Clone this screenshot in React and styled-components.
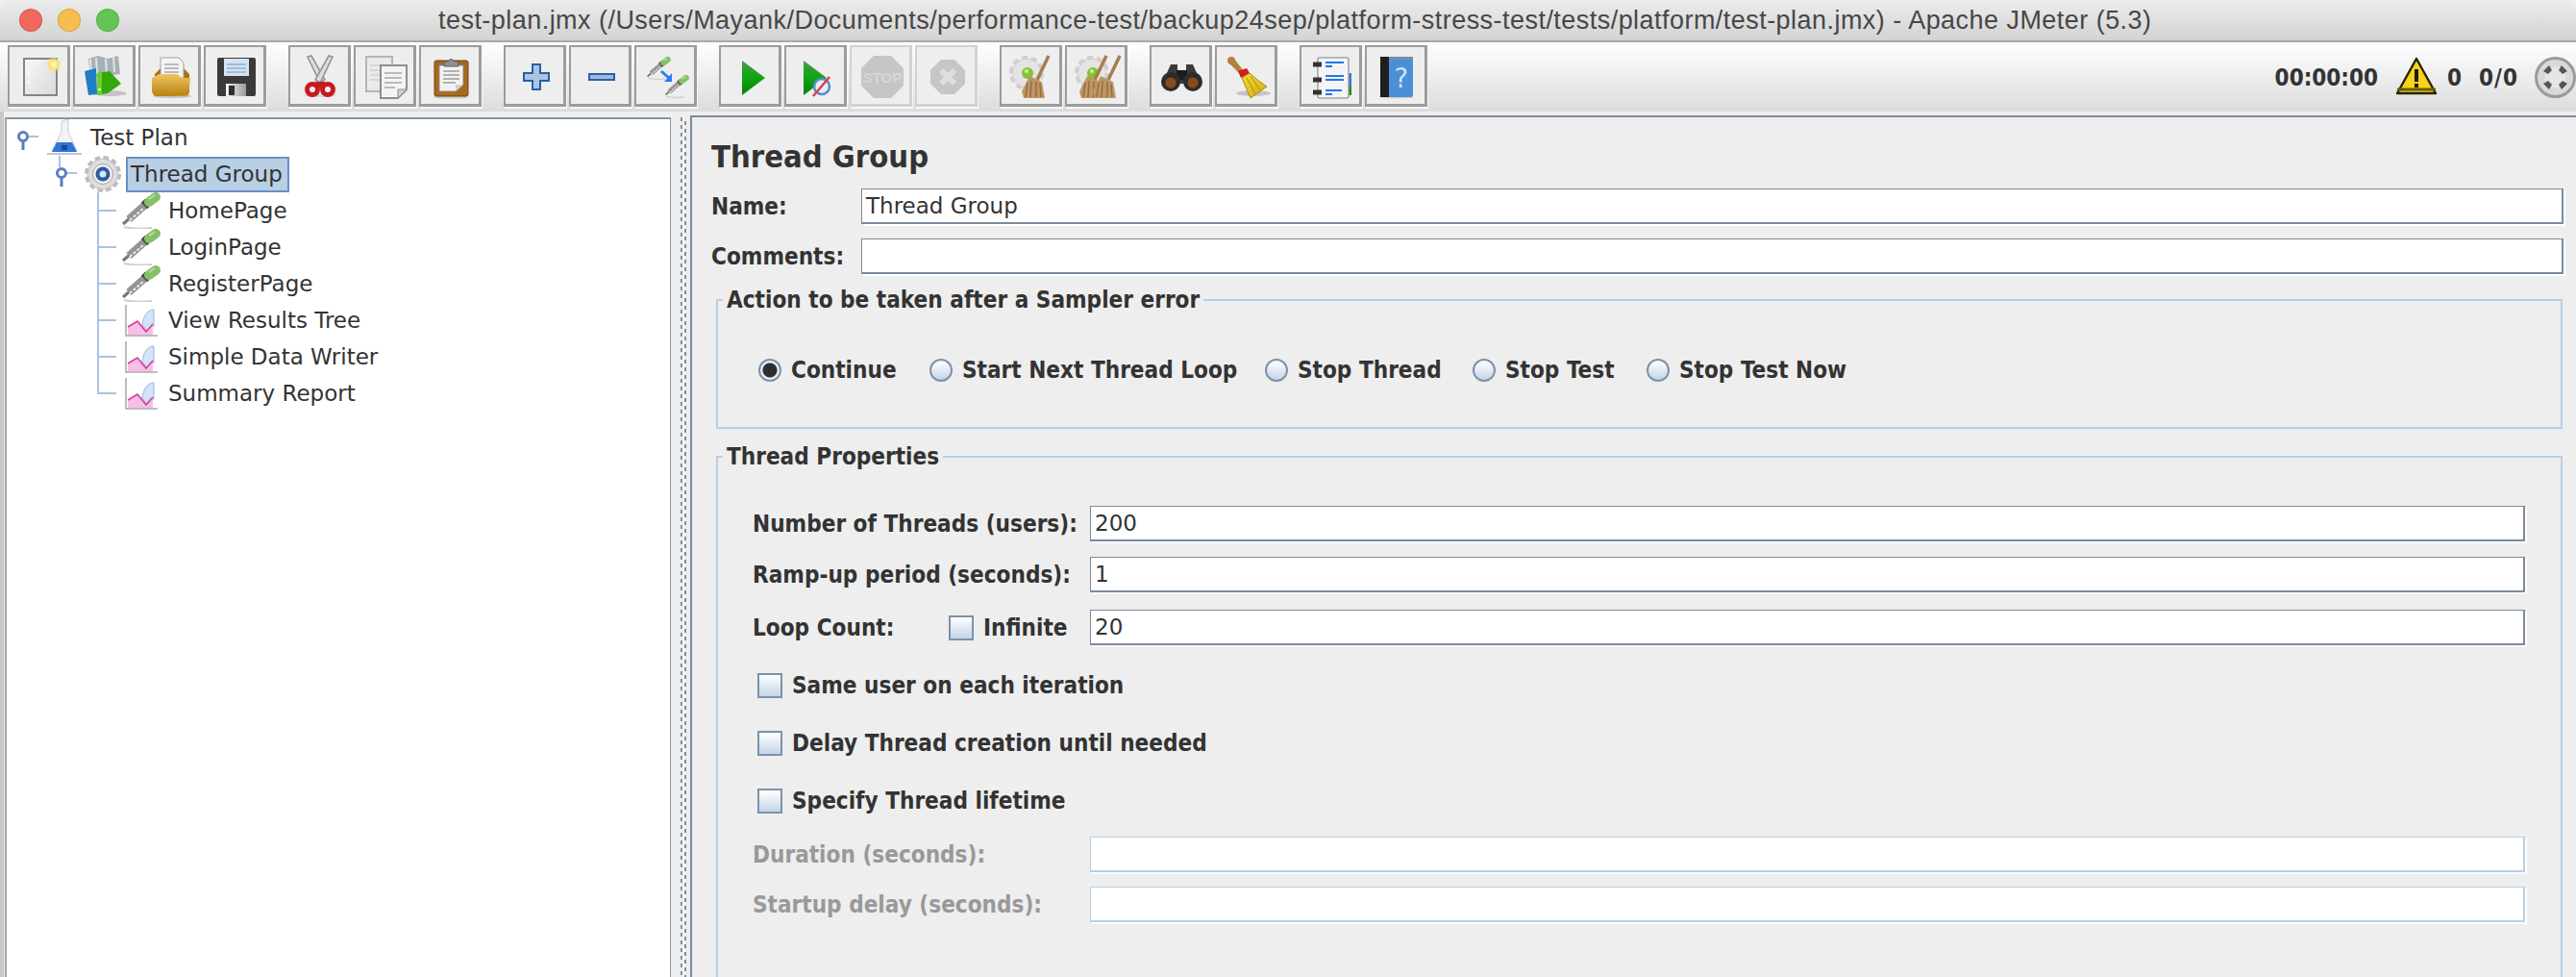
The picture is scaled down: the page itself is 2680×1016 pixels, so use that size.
import React from 'react'
import styled, { createGlobalStyle } from 'styled-components'

const GlobalStyle = createGlobalStyle`
  html, body {
    margin: 0;
    padding: 0;
    background: #eeeeee;
  }
  * {
    box-sizing: border-box;
  }
`

const Dropper = ({ transform }) => (
  <g transform={transform}>
    <path d="M2 36 Q16 39 31 37" fill="none" stroke="#cfcfcf" strokeWidth="2" />
    <line x1="1" y1="33" x2="9" y2="26" stroke="#777" strokeWidth="3" />
    <line x1="7" y1="28" x2="24" y2="13" stroke="#959595" strokeWidth="8" />
    <line x1="8" y1="29" x2="23" y2="16" stroke="#ececec" strokeWidth="2" strokeDasharray="3 2" />
    <line x1="23" y1="14" x2="27" y2="10" stroke="#4a4a4a" strokeWidth="9" />
    <line x1="28" y1="10" x2="35" y2="5" stroke="#86c06a" strokeWidth="10" strokeLinecap="round" />
    <line x1="28" y1="7" x2="34" y2="3" stroke="#b4dd9e" strokeWidth="2" />
  </g>
)

const BlueGear = () => (
  <g>
    <circle cx="21" cy="19" r="16" fill="#dedede" stroke="#c2c2c2" strokeWidth="1" />
    <circle cx="21" cy="19" r="17" fill="none" stroke="#bdbdbd" strokeWidth="4" strokeDasharray="5.5 3.4" />
    <circle cx="21" cy="19" r="10.5" fill="#f0f0f0" stroke="#a5a5a5" />
    <circle cx="21" cy="19" r="7.5" fill="#2a5c9e" />
    <circle cx="21" cy="19" r="3.5" fill="#d5e4f6" />
  </g>
)

const GreenGear = () => (
  <g>
    <circle cx="28" cy="29" r="15" fill="#e4e4e4" stroke="#cdcdcd" />
    <circle cx="28" cy="29" r="16" fill="none" stroke="#cfcfcf" strokeWidth="4" strokeDasharray="6 4" />
    <circle cx="29" cy="29" r="6" fill="#86c22e" />
    <circle cx="28" cy="27" r="2" fill="#d4f0a8" />
  </g>
)

const BroomArt = ({ transform }) => (
  <g transform={transform}>
    <line x1="51" y1="11" x2="39" y2="36" stroke="#a67c50" strokeWidth="3.5" />
    <path d="M31 32 L44 38 L47 55 L25 55 L23 48 Z" fill="#be9567" />
    <path d="M29 39 L27 54 M33 37 L32 54 M38 38 L38 54 M42 40 L43 54" stroke="#94693e" strokeWidth="1.4" />
  </g>
)

const ChartIcon = () => (
  <TreeIcon viewBox="0 0 40 38">
    <path d="M4 3 V35 H37" fill="none" stroke="#a6a6a6" strokeWidth="1.5" />
    <path d="M21 24 C22 14 27 8 33 8 V25 L26 30 Z" fill="#d4e4f8" stroke="#92b6dc" />
    <path d="M6 34 V26 L16 20 L25 31 L32 23 V34 Z" fill="#f7bfe6" />
    <path d="M6 26 L16 20 L25 31 L32 23" fill="none" stroke="#d63c9c" strokeWidth="1.6" />
  </TreeIcon>
)

const icons = {
  newPlan: (
    <>
      <defs>
        <linearGradient id="docFill" x1="0" y1="0" x2="1" y2="1">
          <stop offset="0" stopColor="#f8f8f8" />
          <stop offset="1" stopColor="#d9d9d9" />
        </linearGradient>
        <radialGradient id="glow">
          <stop offset="0" stopColor="#fffbe0" />
          <stop offset="0.6" stopColor="#f5e26a" />
          <stop offset="1" stopColor="#f5e26a" stopOpacity="0" />
        </radialGradient>
      </defs>
      <rect x="17" y="14" width="34" height="38" fill="url(#docFill)" stroke="#858585" strokeWidth="2" />
      <circle cx="22" cy="29" r="1.4" fill="#fff" />
      <circle cx="22" cy="39" r="1.4" fill="#fff" />
      <circle cx="48" cy="20" r="8" fill="url(#glow)" />
    </>
  ),
  templates: (
    <>
      <ellipse cx="38" cy="50" rx="18" ry="3" fill="#c4c4c4" />
      <path d="M16 14 L26 11 L36 14 L47 11 L49 30 L18 34 Z" fill="#a7b0b5" />
      <path d="M18 14 L19 30 M24 13 L25 30 M34 14 L35 30 M42 12 L43 28" stroke="#dfe5e8" strokeWidth="2" />
      <path d="M12 27 L24 24 L25 51 L16 52 Z" fill="#1f7dc4" />
      <path d="M25 29 L38 27 L50 40 L36 50 L25 52 Z" fill="#35a80c" />
      <path d="M25 29 L30 28 L30 51 L25 52 Z" fill="#6bd028" />
      <circle cx="27.5" cy="46" r="1.3" fill="#fff" />
    </>
  ),
  open: (
    <>
      <defs>
        <linearGradient id="folderFill" x1="0" y1="0" x2="0" y2="1">
          <stop offset="0" stopColor="#efc665" />
          <stop offset="1" stopColor="#b8810e" />
        </linearGradient>
      </defs>
      <ellipse cx="35" cy="53" rx="20" ry="2" fill="#c4c4c4" />
      <path d="M17 30 L23 24 H47 L53 30 V50 H17 Z" fill="#a67310" />
      <path d="M23 13 H42 L47 18 V34 H23 Z" fill="#f4f4f4" stroke="#a0a0a0" />
      <path d="M27 20 H42 M27 24 H42 M27 28 H42" stroke="#a8a8a8" strokeWidth="1.5" />
      <path d="M14 34 L22 30 H40 L46 34 H54 L52 52 Q50 53 18 53 Q15 52 14 48 Z" fill="url(#folderFill)" />
    </>
  ),
  save: (
    <>
      <defs>
        <linearGradient id="shutter" x1="0" y1="0" x2="1" y2="0">
          <stop offset="0" stopColor="#f5f5f5" />
          <stop offset="1" stopColor="#9a9a9a" />
        </linearGradient>
      </defs>
      <rect x="14" y="13" width="40" height="40" rx="2" fill="#3a3a3c" />
      <rect x="21" y="14" width="26" height="18" fill="#d5e3f1" />
      <path d="M24 20 H44 M24 24 H44 M24 28 H44" stroke="#8fb0d0" strokeWidth="1.5" />
      <rect x="23" y="40" width="21" height="13" fill="url(#shutter)" />
      <rect x="26" y="42" width="6" height="10" fill="#2e2e2e" />
    </>
  ),
  cut: (
    <>
      <ellipse cx="33" cy="52" rx="17" ry="2" fill="#d8d8d8" />
      <path d="M20 12 L24 11 L38 36 L33 39 Z" fill="#dedede" stroke="#959595" strokeWidth="1.6" />
      <path d="M46 12 L42 11 L28 36 L33 39 Z" fill="#dedede" stroke="#959595" strokeWidth="1.6" />
      <circle cx="25" cy="46" r="5.5" fill="#eee" stroke="#c61a1f" strokeWidth="5" />
      <circle cx="41" cy="46" r="5.5" fill="#eee" stroke="#c61a1f" strokeWidth="5" />
      <path d="M28 38 L38 38 L36 44 L30 44 Z" fill="#c61a1f" />
    </>
  ),
  copy: (
    <>
      <rect x="13" y="12" width="27" height="36" fill="#eaeaea" stroke="#b5b5b5" strokeWidth="2" />
      <path d="M17 21 H27 M17 26 H27 M17 31 H27 M17 36 H27" stroke="#cfcfcf" strokeWidth="1.6" />
      <path d="M28 21 H55 V46 L46 55 H28 Z" fill="#f4f4f4" stroke="#8e8e8e" strokeWidth="2" />
      <path d="M55 46 H46 V55 Z" fill="#cfcfcf" stroke="#8e8e8e" />
      <path d="M32 29 H50 M32 34 H50 M32 39 H50 M32 44 H43" stroke="#a6a6a6" strokeWidth="1.6" />
    </>
  ),
  paste: (
    <>
      <ellipse cx="33" cy="54" rx="18" ry="1.6" fill="#cfcfcf" />
      <rect x="16" y="16" width="35" height="37" rx="2" fill="#a9681f" stroke="#70430f" />
      <path d="M21 21 H46 V41 L38 48 H21 Z" fill="#f2f2f2" stroke="#8a8a8a" />
      <path d="M46 41 H38 V48 Z" fill="#cfcfcf" />
      <path d="M25 27 H42 M25 31 H42 M25 35 H42 M25 39 H38" stroke="#9c9c9c" strokeWidth="1.5" />
      <path d="M26 22 V17 H30 Q33 12 37 17 H41 V22 Z" fill="#8f8f8f" stroke="#5f5f5f" />
    </>
  ),
  add: (
    <path
      d="M30 20 H38 V29 H47 V37 H38 V46 H30 V37 H21 V29 H30 Z"
      fill="#a9c5e6"
      stroke="#2c5fa3"
      strokeWidth="2"
    />
  ),
  remove: <rect x="21" y="30" width="26" height="6" fill="#9dbbde" stroke="#2c5fa3" strokeWidth="2" />,
  duplicate: (
    <>
      <Dropper transform="translate(13 12) scale(0.62)" />
      <Dropper transform="translate(32 31) scale(0.62)" />
      <path d="M28 27 L37 35" stroke="#2b7cf0" strokeWidth="3" />
      <path d="M39 29 V38 H31 Z" fill="#2b7cf0" />
    </>
  ),
  run: (
    <>
      <defs>
        <linearGradient id="runFill" x1="0" y1="0" x2="0" y2="1">
          <stop offset="0" stopColor="#4c9a4c" />
          <stop offset="0.5" stopColor="#0fa50f" />
          <stop offset="1" stopColor="#0a7d0a" />
        </linearGradient>
      </defs>
      <path d="M24 16 L48 34 L24 52 Z" fill="url(#runFill)" />
    </>
  ),
  runNoPause: (
    <>
      <path d="M20 16 L44 34 L20 52 Z" fill="url(#runFill)" />
      <circle cx="39" cy="43" r="8" fill="#e4edf7" stroke="#4f8fd0" strokeWidth="2.5" />
      <path d="M30 53 L47 33" stroke="#e8384a" strokeWidth="2.4" />
    </>
  ),
  stop: (
    <>
      <path d="M25 11 H43 L56 24 V42 L43 55 H25 L12 42 V24 Z" fill="#c6c6c6" />
      <text x="34" y="39" textAnchor="middle" fontFamily="Liberation Sans, sans-serif" fontWeight="700" fontSize="15" fill="#d6d6d6">
        STOP
      </text>
    </>
  ),
  shutdown: (
    <>
      <path d="M27 15 H41 L52 26 V40 L41 51 H27 L16 40 V26 Z" fill="#c6c6c6" />
      <path d="M27 26 L41 40 M41 26 L27 40" stroke="#dedede" strokeWidth="6" />
    </>
  ),
  clear: (
    <>
      <GreenGear />
      <BroomArt />
    </>
  ),
  clearAll: (
    <>
      <GreenGear />
      <BroomArt transform="translate(-8 0)" />
      <BroomArt transform="translate(6 0)" />
    </>
  ),
  search: (
    <>
      <path d="M22 20 H29 V28 H38 V20 H45 L54 40 H13 Z" fill="#3b3b3b" />
      <rect x="28" y="26" width="11" height="10" fill="#1c1c1c" />
      <circle cx="22" cy="38" r="10" fill="#2c2c2c" />
      <circle cx="45" cy="38" r="10" fill="#2c2c2c" />
      <circle cx="22" cy="39" r="5.5" fill="#8a4b1c" />
      <circle cx="45" cy="39" r="5.5" fill="#8a4b1c" />
    </>
  ),
  broom: (
    <>
      <defs>
        <linearGradient id="straw" x1="0" y1="0" x2="1" y2="1">
          <stop offset="0" stopColor="#f5da3c" />
          <stop offset="1" stopColor="#d6a90c" />
        </linearGradient>
      </defs>
      <ellipse cx="40" cy="50" rx="18" ry="3" fill="#c4c4c4" />
      <path d="M15 15 Q17 11 20 14 L30 27 L26 30 L15 19 Z" fill="#b5803c" />
      <circle cx="17" cy="16" r="4" fill="#b5803c" />
      <path d="M24 27 L33 24 L36 29 L27 34 Z" fill="#d01c1c" />
      <path d="M28 34 L36 29 Q46 38 54 43 L37 55 Q33 46 28 34 Z" fill="url(#straw)" stroke="#ab8a14" />
      <path d="M33 34 L42 51 M37 32 L47 47" stroke="#ab8a14" />
    </>
  ),
  functions: (
    <>
      <rect x="49" y="29" width="5" height="14" fill="#2a7ad8" />
      <rect x="49" y="43" width="5" height="9" fill="#1f8a1f" />
      <rect x="19" y="13" width="32" height="42" rx="2" fill="#f5f5f5" stroke="#a5a5a5" strokeWidth="1.6" />
      <path d="M14 20 H23 M14 36 H23 M14 49 H23" stroke="#333" strokeWidth="5" />
      <path d="M27 18 H46 M27 22 H34 M27 32 H46 M27 36 H46 M27 47 H44 M27 51 H34" stroke="#1f78ea" strokeWidth="2" />
    </>
  ),
  help: (
    <>
      <ellipse cx="33" cy="54" rx="18" ry="1.4" fill="#cfcfcf" />
      <rect x="16" y="12" width="34" height="42" rx="2" fill="#4a8fd8" />
      <rect x="16" y="12" width="9" height="42" fill="#1e1e1e" />
      <rect x="25" y="12" width="25" height="3" fill="#6f8faf" />
      <text x="38" y="44" textAnchor="middle" fontFamily="DejaVu Sans, sans-serif" fontSize="28" fill="#cfe2f6">
        ?
      </text>
    </>
  ),
}

const toolGroups = [
  ['newPlan', 'templates', 'open', 'save'],
  ['cut', 'copy', 'paste'],
  ['add', 'remove', 'duplicate'],
  ['run', 'runNoPause', 'stop', 'shutdown'],
  ['clear', 'clearAll'],
  ['search', 'broom'],
  ['functions', 'help'],
]

const samplers = ['HomePage', 'LoginPage', 'RegisterPage']
const listeners = ['View Results Tree', 'Simple Data Writer', 'Summary Report']

const App = () => {
  return (
    <Window>
      <GlobalStyle />
      <TitleBar>
        <Lights>
          <Light $color="#f0685e" />
          <Light $color="#f6bd4f" />
          <Light $color="#62c554" />
        </Lights>
        <Title>
          test-plan.jmx (/Users/Mayank/Documents/performance-test/backup24sep/platform-stress-test/tests/platform/test-plan.jmx) - Apache JMeter (5.3)
        </Title>
      </TitleBar>

      <Toolbar>
        {toolGroups.map((group, i) => (
          <ToolGroup key={i}>
            {group.map(name => {
              const disabled = name === 'stop' || name === 'shutdown'
              return (
                <ToolButton key={name} $disabled={disabled}>
                  <svg width="65" height="64" viewBox="0 0 65 64">{icons[name]}</svg>
                </ToolButton>
              )
            })}
          </ToolGroup>
        ))}
        <Status>
          <Timer>00:00:00</Timer>
          <WarnIcon width="44" height="40" viewBox="0 0 44 40">
            <path d="M22 2 L42 38 H2 Z" fill="#f7d21a" stroke="#26220a" strokeWidth="2.4" strokeLinejoin="round" />
            <path d="M2 34 H42" stroke="#6b5a0a" strokeWidth="3" />
            <rect x="20" y="13" width="4" height="13" fill="#1d1a08" />
            <rect x="20" y="28" width="4" height="4" fill="#1d1a08" />
          </WarnIcon>
          <Count>0</Count>
          <Ratio>0/0</Ratio>
          <FullScreen>
            <svg width="43" height="43" viewBox="0 0 43 43">
              <circle cx="21.5" cy="21.5" r="20" fill="#d9d9d9" stroke="#9a9a9a" strokeWidth="3" />
              <circle cx="21.5" cy="21.5" r="11" fill="#e6e6e6" />
              <path d="M9 15 L15 9 L18 14 L14 18 Z M34 15 L28 9 L25 14 L29 18 Z M9 28 L15 34 L18 29 L14 25 Z M34 28 L28 34 L25 29 L29 25 Z" fill="#555" />
            </svg>
          </FullScreen>
        </Status>
      </Toolbar>

      <Main>
        <TreePanel>
          <TreeRow $indent={10}>
            <svg width="24" height="38" viewBox="0 0 24 38">
              <path d="M12 18 H23" stroke="#a9c3e0" strokeWidth="2" />
              <circle cx="7" cy="18" r="4.5" fill="#fff" stroke="#5c7fbd" strokeWidth="3" />
              <path d="M7 23 V32" stroke="#5c7fbd" strokeWidth="3" />
            </svg>
            <TreeIcon viewBox="0 0 40 38" $gap={6}>
              <path d="M2 36 H38" stroke="#aab3bd" strokeWidth="1.5" />
              <path d="M17 2 L24 0 V13 L33 33 H7 L17 13 Z" fill="#f1f3f5" stroke="#c6ccd2" />
              <path d="M12 24 H28 L33 34 H7 Z" fill="#2b78d8" />
              <path d="M17 27 H23 V32 H17 Z" fill="#174a9e" />
            </TreeIcon>
            <TreeLabel $gap={7}>Test Plan</TreeLabel>
          </TreeRow>
          <TreeRow $indent={50}>
            <svg width="24" height="38" viewBox="0 0 24 38">
              <path d="M5 0 V12" stroke="#a9c3e0" strokeWidth="2" />
              <path d="M12 18 H23" stroke="#a9c3e0" strokeWidth="2" />
              <circle cx="7" cy="18" r="4.5" fill="#fff" stroke="#5c7fbd" strokeWidth="3" />
              <path d="M7 23 V32" stroke="#5c7fbd" strokeWidth="3" />
            </svg>
            <TreeIcon viewBox="0 0 42 38" $gap={5} $wide>
              <BlueGear />
            </TreeIcon>
            <SelectedLabel>Thread Group</SelectedLabel>
          </TreeRow>
          {samplers.map(name => (
            <TreeRow key={name} $indent={88}>
              <Branch />
              <TreeIcon viewBox="0 0 40 38">
                <Dropper />
              </TreeIcon>
              <TreeLabel $gap={8}>{name}</TreeLabel>
            </TreeRow>
          ))}
          {listeners.map((name, i) => (
            <TreeRow key={name} $indent={88}>
              <Branch $last={i === listeners.length - 1} />
              <ChartIcon />
              <TreeLabel $gap={8}>{name}</TreeLabel>
            </TreeRow>
          ))}
        </TreePanel>

        <Splitter />

        <Editor>
          <Heading>Thread Group</Heading>
          <FieldRow>
            <FieldLabel $width={156}>Name:</FieldLabel>
            <TextField>Thread Group</TextField>
          </FieldRow>
          <FieldRow $top={15}>
            <FieldLabel $width={156}>Comments:</FieldLabel>
            <TextField />
          </FieldRow>

          <Group $top={12}>
            <Legend>Action to be taken after a Sampler error</Legend>
            <RadioRow>
              <Radio $checked />
              <OptionLabel $width={144}>Continue</OptionLabel>
              <Radio />
              <OptionLabel $width={315}>Start Next Thread Loop</OptionLabel>
              <Radio />
              <OptionLabel $width={182}>Stop Thread</OptionLabel>
              <Radio />
              <OptionLabel $width={147}>Stop Test</OptionLabel>
              <Radio />
              <OptionLabel>Stop Test Now</OptionLabel>
            </RadioRow>
          </Group>

          <Group $top={14}>
            <Legend>Thread Properties</Legend>
            <PropertiesBody>
              <FieldRow $top={36}>
                <FieldLabel $width={351}>Number of Threads (users):</FieldLabel>
                <TextField>200</TextField>
              </FieldRow>
              <FieldRow $top={16}>
                <FieldLabel $width={351}>Ramp-up period (seconds):</FieldLabel>
                <TextField>1</TextField>
              </FieldRow>
              <FieldRow $top={18}>
                <FieldLabel $width={204}>Loop Count:</FieldLabel>
                <InlineCheck $width={147}>
                  <Checkbox />
                  <OptionLabel>Infinite</OptionLabel>
                </InlineCheck>
                <TextField>20</TextField>
              </FieldRow>
              <CheckRow $top={26}>
                <Checkbox />
                <OptionLabel>Same user on each iteration</OptionLabel>
              </CheckRow>
              <CheckRow $top={28}>
                <Checkbox />
                <OptionLabel>Delay Thread creation until needed</OptionLabel>
              </CheckRow>
              <CheckRow $top={28}>
                <Checkbox />
                <OptionLabel>Specify Thread lifetime</OptionLabel>
              </CheckRow>
              <FieldRow $top={21}>
                <FieldLabel $width={351} $disabled>Duration (seconds):</FieldLabel>
                <TextField $disabled />
              </FieldRow>
              <FieldRow $top={15}>
                <FieldLabel $width={351} $disabled>Startup delay (seconds):</FieldLabel>
                <TextField $disabled />
              </FieldRow>
            </PropertiesBody>
          </Group>
        </Editor>
      </Main>
    </Window>
  )
}

const Branch = ({ $last }) => (
  <svg width="32" height="38" viewBox="0 0 32 38">
    <path d={$last ? 'M7 0 V19 H26' : 'M7 0 V38 M7 19 H26'} fill="none" stroke="#a9c3e0" strokeWidth="2" />
  </svg>
)

const Window = styled.div`
  width: 2680px;
  height: 1016px;
  display: flex;
  flex-direction: column;
  overflow: hidden;
  background: #eeeeee;
  border-radius: 10px 10px 0 0;
  font-family: 'DejaVu Sans', sans-serif;
  color: #333333;
`

const TitleBar = styled.div`
  flex: none;
  height: 44px;
  display: flex;
  align-items: center;
  padding-left: 20px;
  background: linear-gradient(#ececec, #d3d3d3);
  border-bottom: 2px solid #a8a8a8;
`

const Lights = styled.div`
  display: flex;
  gap: 16px;
`

const Light = styled.span`
  width: 24px;
  height: 24px;
  border-radius: 50%;
  background: ${props => props.$color};
  border: 1px solid rgba(0, 0, 0, 0.12);
`

const Title = styled.div`
  margin-left: 332px;
  font-family: 'Liberation Sans', sans-serif;
  font-size: 27px;
  letter-spacing: 0.46px;
  color: #474747;
  white-space: nowrap;
`

const Toolbar = styled.div`
  flex: none;
  height: 72px;
  display: flex;
  padding: 3px 0 0 8px;
  gap: 23px;
  background: linear-gradient(#ffffff, #dcdcdc);
`

const ToolGroup = styled.div`
  display: flex;
  gap: 3px;
  height: 64px;
`

const ToolButton = styled.div`
  width: 65px;
  height: 64px;
  background: #eeeeee;
  border: 2px solid ${props => (props.$disabled ? '#d2d2d2' : '#9c9c9c')};
  border-right-width: 3px;
  border-bottom-width: 3px;
  box-shadow: 1px 2px 0 #f8f8f8;
  overflow: hidden;
  svg {
    display: block;
    margin: -2px 0 0 -2px;
    filter: blur(0.5px);
  }
`

const Status = styled.div`
  margin-left: auto;
  height: 68px;
  display: flex;
  align-items: center;
  font-family: 'DejaVu Sans Condensed', 'DejaVu Sans', sans-serif;
  font-weight: 700;
  font-size: 24px;
  color: #333333;
  svg {
    flex: none;
  }
`

const Timer = styled.span`
  margin-right: 18px;
`

const WarnIcon = styled.svg`
  margin-top: -4px;
`

const Count = styled.span`
  margin-left: 10px;
`

const Ratio = styled.span`
  margin-left: 18px;
  letter-spacing: 1px;
`

const FullScreen = styled.span`
  margin-left: 17px;
  margin-top: -2px;
  display: flex;
`

const Main = styled.div`
  flex: 1;
  min-height: 0;
  display: flex;
  padding: 6px 0 0 5px;
  box-shadow: inset 4px 0 0 #c8c8c8;
`

const TreePanel = styled.div`
  flex: none;
  width: 693px;
  background: #ffffff;
  border: 2px solid #8496a8;
  border-bottom: 0;
  border-left-color: #a5a5a5;
  border-right-width: 1px;
`

const TreeRow = styled.div`
  height: 38px;
  display: flex;
  align-items: center;
  padding-left: ${props => props.$indent}px;
  svg {
    flex: none;
  }
`

const TreeIcon = styled.svg`
  width: ${props => (props.$wide ? 42 : 40)}px;
  height: 38px;
  margin-left: ${props => props.$gap || 0}px;
  filter: blur(0.3px);
`

const TreeLabel = styled.span`
  margin-left: ${props => props.$gap}px;
  font-size: 23px;
  white-space: nowrap;
`

const SelectedLabel = styled.span`
  margin-left: 3px;
  height: 37px;
  padding: 0 5px 0 3px;
  display: flex;
  align-items: center;
  font-size: 23px;
  white-space: nowrap;
  background: #b8cfe5;
  border: 2px solid #6a8fc8;
`

const Splitter = styled.div`
  flex: none;
  width: 20px;
  background-color: #eeeeee;
  background-image:
    linear-gradient(#7d8fa1 50%, transparent 50%),
    linear-gradient(transparent 50%, #7d8fa1 50%),
    linear-gradient(#ffffff 50%, transparent 50%);
  background-size: 2px 8px;
  background-position: 10px 0, 14px 0, 12px 0;
  background-repeat: repeat-y;
`

const Editor = styled.div`
  flex: 1;
  min-width: 0;
  padding: 23px 13px 0 20px;
  border-left: 2px solid #7b8b9c;
  border-top: 2px solid #7b8b9c;
  margin-top: -2px;
`

const Heading = styled.div`
  height: 36px;
  margin-bottom: 15px;
  display: flex;
  align-items: center;
  font-family: 'DejaVu Sans Condensed', 'DejaVu Sans', sans-serif;
  font-weight: 700;
  font-size: 32.5px;
  white-space: nowrap;
`

const FieldRow = styled.div`
  height: 37px;
  margin-top: ${props => props.$top || 0}px;
  display: flex;
  align-items: center;
`

const FieldLabel = styled.div`
  flex: none;
  width: ${props => props.$width}px;
  font-family: 'DejaVu Sans Condensed', 'DejaVu Sans', sans-serif;
  font-weight: 700;
  font-size: 24.1px;
  white-space: nowrap;
  color: ${props => (props.$disabled ? '#999999' : '#333333')};
`

const TextField = styled.div`
  flex: 1;
  min-width: 0;
  height: 37px;
  padding-left: 4px;
  display: flex;
  align-items: center;
  font-size: 23px;
  color: #333333;
  background: #ffffff;
  border: solid ${props => (props.$disabled ? '#b8cfe5' : '#7b8b9c')};
  border-width: 1px 2px 2px 1px;
  box-shadow: 2px 2px 0 #ffffff;
`

const Group = styled.fieldset`
  margin: ${props => props.$top}px 1px 0 5px;
  padding: 0;
  min-inline-size: 0;
  border: 2px solid #b8cfe5;
`

const PropertiesBody = styled.div`
  padding: 0 37px 80px 36px;
`

const Legend = styled.legend`
  height: 30px;
  margin-left: 5px;
  padding: 0 4px;
  display: flex;
  align-items: center;
  font-family: 'DejaVu Sans Condensed', 'DejaVu Sans', sans-serif;
  font-weight: 700;
  font-size: 24.1px;
  white-space: nowrap;
`

const RadioRow = styled.div`
  height: 32px;
  margin: 42px 0 43px 42px;
  display: flex;
  align-items: center;
`

const Radio = styled.span`
  flex: none;
  width: 24px;
  height: 24px;
  border-radius: 50%;
  border: 2px solid #7d92a8;
  background: ${props =>
    props.$checked
      ? 'radial-gradient(circle, #2e2e2e 0 7px, #e6eef6 8px)'
      : 'linear-gradient(#ffffff, #c3d5e8)'};
`

const OptionLabel = styled.span`
  flex: none;
  margin-left: 10px;
  width: ${props => (props.$width ? `${props.$width}px` : 'auto')};
  font-family: 'DejaVu Sans Condensed', 'DejaVu Sans', sans-serif;
  font-weight: 700;
  font-size: 24.1px;
  white-space: nowrap;
`

const InlineCheck = styled.div`
  flex: none;
  width: ${props => props.$width}px;
  display: flex;
  align-items: center;
`

const Checkbox = styled.span`
  flex: none;
  width: 26px;
  height: 26px;
  border: 2px solid #7d92a8;
  background: linear-gradient(#ffffff, #c3d5e8);
`

const CheckRow = styled.div`
  height: 32px;
  margin-top: ${props => props.$top}px;
  padding-left: 5px;
  display: flex;
  align-items: center;
`

export default App
